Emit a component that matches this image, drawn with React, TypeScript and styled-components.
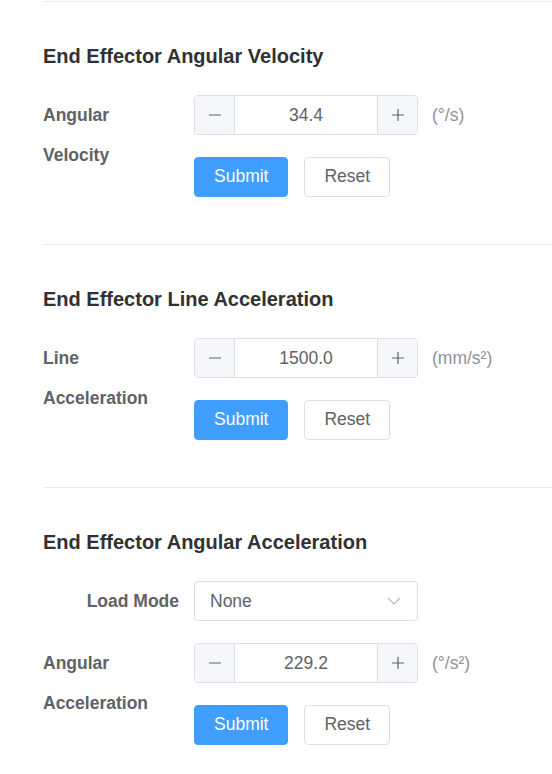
import React from "react";
import styled, { createGlobalStyle } from "styled-components";

const GlobalStyle = createGlobalStyle`
  html, body {
    margin: 0;
    padding: 0;
    background: #ffffff;
  }
  body {
    font-family: "Liberation Sans", Arial, sans-serif;
    color: #606266;
  }
  * { box-sizing: border-box; }
`;

const Page = styled.div`
  padding: 1px 0 0 43px;
  width: 552px;
`;

const Section = styled.section`
  border-top: 1px solid #e9ebef;
  padding: 39px 0 47px 0;
`;

const Heading = styled.h3`
  margin: 0 0 24px 0;
  font-size: 20px;
  line-height: 30px;
  font-weight: 700;
  color: #303133;
`;

const Form = styled.div`
  display: grid;
  grid-template-columns: 151px auto;
  row-gap: 22px;
  justify-items: start;
`;

const Label = styled.div<{ $align?: "left" | "right"; $span?: number }>`
  grid-column: 1;
  grid-row: span ${(p) => p.$span ?? 1};
  width: 151px;
  padding-right: 15px;
  font-size: 17.5px;
  font-weight: 700;
  line-height: 40px;
  color: #606266;
  text-align: ${(p) => p.$align ?? "left"};
`;

const Field = styled.div`
  grid-column: 2;
  display: flex;
  align-items: center;
  height: 40px;
`;

const NumberBox = styled.div`
  display: flex;
  width: 224px;
  height: 40px;
  border: 1px solid #dcdfe6;
  border-radius: 4px;
  overflow: hidden;
  background: #fff;
`;

const StepButton = styled.div<{ $side: "left" | "right" }>`
  width: 40px;
  flex: none;
  display: flex;
  align-items: center;
  justify-content: center;
  background: #f5f7fa;
  color: #606266;
  ${(p) =>
    p.$side === "left"
      ? "border-right: 1px solid #dcdfe6;"
      : "border-left: 1px solid #dcdfe6;"}
`;

const Value = styled.div`
  flex: 1;
  display: flex;
  align-items: center;
  justify-content: center;
  font-size: 17.5px;
  color: #606266;
`;

const Unit = styled.span`
  margin-left: 14px;
  font-size: 17.5px;
  color: #909399;
`;

const Select = styled.div`
  width: 224px;
  height: 40px;
  border: 1px solid #dcdfe6;
  border-radius: 4px;
  display: flex;
  align-items: center;
  justify-content: space-between;
  padding: 0 16px 0 15px;
  font-size: 17.5px;
  color: #606266;
`;

const Actions = styled.div`
  grid-column: 2;
  display: flex;
  gap: 16px;
`;

const Button = styled.button<{ $primary?: boolean }>`
  height: 40px;
  padding: 0 19px;
  border-radius: 4px;
  font-family: "Liberation Sans", Arial, sans-serif;
  font-size: 17.5px;
  line-height: 1;
  cursor: pointer;
  border: 1px solid ${(p) => (p.$primary ? "#409eff" : "#dcdfe6")};
  background: ${(p) => (p.$primary ? "#409eff" : "#ffffff")};
  color: ${(p) => (p.$primary ? "#ffffff" : "#606266")};
`;

const Minus = () => (
  <svg width="14" height="14" viewBox="0 0 14 14">
    <path d="M1 7h12" stroke="#606266" strokeWidth="1.2" />
  </svg>
);

const Plus = () => (
  <svg width="14" height="14" viewBox="0 0 14 14">
    <path d="M1 7h12M7 1v12" stroke="#606266" strokeWidth="1.2" />
  </svg>
);

const Chevron = () => (
  <svg width="14" height="8" viewBox="0 0 14 8">
    <path d="M1 1l6 6 6-6" fill="none" stroke="#b4b8c0" strokeWidth="1.1" />
  </svg>
);

const NumberInput = ({ value }: { value: string }) => (
  <NumberBox>
    <StepButton $side="left">
      <Minus />
    </StepButton>
    <Value>{value}</Value>
    <StepButton $side="right">
      <Plus />
    </StepButton>
  </NumberBox>
);

const ActionRow = () => (
  <Actions>
    <Button $primary>Submit</Button>
    <Button>Reset</Button>
  </Actions>
);

type Item = {
  title: string;
  label: string;
  value: string;
  unit: string;
  loadMode?: boolean;
};

const items: Item[] = [
  { title: "End Effector Angular Velocity", label: "Angular Velocity", value: "34.4", unit: "(°/s)" },
  { title: "End Effector Line Acceleration", label: "Line Acceleration", value: "1500.0", unit: "(mm/s²)" },
  {
    title: "End Effector Angular Acceleration",
    label: "Angular Acceleration",
    value: "229.2",
    unit: "(°/s²)",
    loadMode: true,
  },
];

export default function App() {
  return (
    <>
      <GlobalStyle />
      <Page>
        {items.map((it) => (
          <Section key={it.title}>
            <Heading>{it.title}</Heading>
            <Form>
              {it.loadMode && (
                <>
                  <Label $align="right">Load Mode</Label>
                  <Field>
                    <Select>
                      <span>None</span>
                      <Chevron />
                    </Select>
                  </Field>
                </>
              )}
              <Label $span={2}>{it.label}</Label>
              <Field>
                <NumberInput value={it.value} />
                <Unit>{it.unit}</Unit>
              </Field>
              <ActionRow />
            </Form>
          </Section>
        ))}
      </Page>
    </>
  );
}
